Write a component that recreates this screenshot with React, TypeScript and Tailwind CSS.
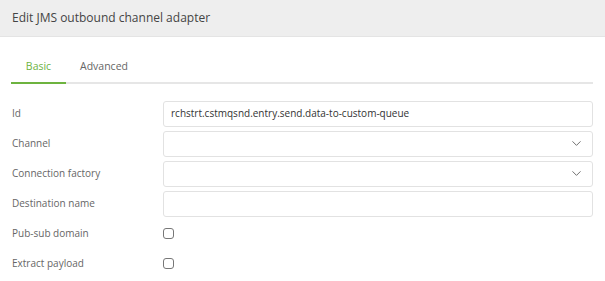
import { ChevronDown } from 'lucide-react';

const font = { fontFamily: '"Open Sans", "Noto Sans", sans-serif' };

function Row({ label, children }: { label: string; children: React.ReactNode }) {
    return (
        <div className="flex items-center h-[30px]">
            <div className="w-[151px] text-[10px] text-[#666]">{label}</div>
            <div className="flex-1">{children}</div>
        </div>
    );
}

function Input({ value, select }: { value?: string; select?: boolean }) {
    return (
        <div className="h-[26px] rounded-[3px] border border-[#e2e2e2] bg-white flex items-center justify-between px-[7px] text-[10px] text-[#333]">
            <span>{value}</span>
            {select && <ChevronDown className="w-[15px] h-[15px] text-[#666] mr-[1px]" strokeWidth={1.5} />}
        </div>
    );
}

function Check() {
    return <div className="w-[11px] h-[11px] rounded-[3px] border border-[#777] bg-white" />;
}

export default function App() {
    return (
        <div className="w-[605px] h-[281px] bg-white overflow-hidden" style={font}>
            <div className="h-[37px] bg-[#eeeeee] border-b border-[#e4e4e4] flex items-center px-[12px] text-[12px] text-[#444]">
                Edit JMS outbound channel adapter
            </div>
            <div className="px-[12px]">
                <div className="mt-[22px] flex border-b-2 border-[#e6e6e6] ml-[-1px]">
                    <div className="w-[55px] text-center text-[10.5px] text-[#6db33f] pb-[7px] border-b-2 border-[#6db33f] mb-[-2px]">
                        Basic
                    </div>
                    <div className="w-[76px] text-center text-[10.5px] text-[#666] pb-[7px]">Advanced</div>
                </div>
                <div className="mt-[15px] w-[581px]">
                    <Row label="Id">
                        <Input value="rchstrt.cstmqsnd.entry.send.data-to-custom-queue" />
                    </Row>
                    <Row label="Channel">
                        <Input select />
                    </Row>
                    <Row label="Connection factory">
                        <Input select />
                    </Row>
                    <Row label="Destination name">
                        <Input />
                    </Row>
                    <Row label="Pub-sub domain">
                        <Check />
                    </Row>
                    <Row label="Extract payload">
                        <Check />
                    </Row>
                </div>
            </div>
        </div>
    );
}
